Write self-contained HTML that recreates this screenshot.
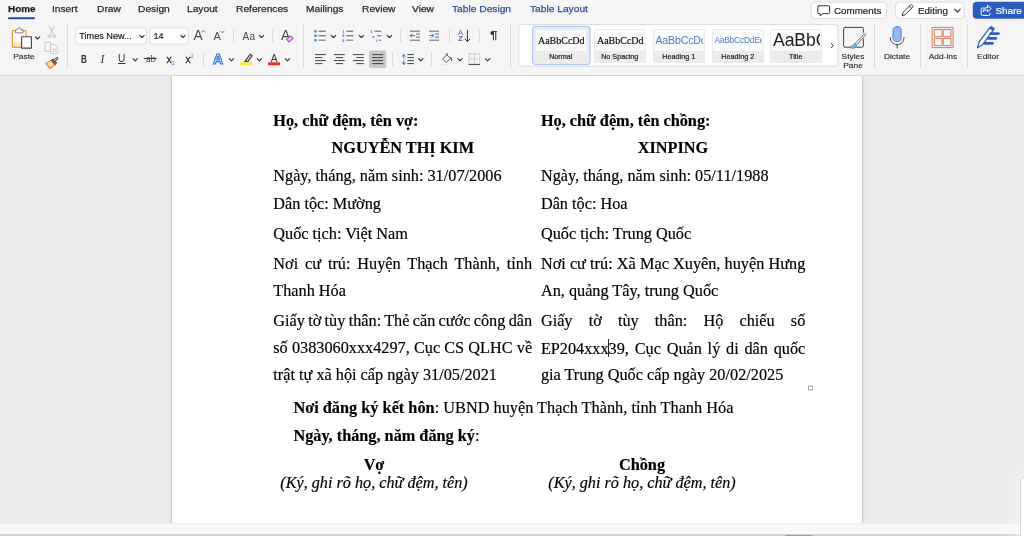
<!DOCTYPE html>
<html lang="vi">
<head>
<meta charset="utf-8">
<title>Document</title>
<style>
html,body{margin:0;padding:0;}
body{width:1024px;height:536px;overflow:hidden;position:relative;background:#ebebeb;font-family:"Liberation Sans",sans-serif;color:#222;}
.abs{position:absolute;}
#ribbon{position:absolute;left:0;top:0;width:1024px;height:75px;background:#f5f5f5;border-bottom:1px solid #d6d6d6;overflow:hidden;will-change:transform;}
.tile{position:absolute;top:29px;width:51.5px;height:33.7px;overflow:hidden;border-radius:2px;background:#fafafa;outline:1px solid rgba(0,0,0,.06);outline-offset:-1px;}
.tp{position:absolute;left:0;top:1.3px;width:calc(100% - 1.5px);height:20.3px;line-height:21.6px;white-space:nowrap;overflow:hidden;box-sizing:border-box;}
.tl{position:absolute;left:0;top:21.6px;width:100%;height:12.4px;line-height:11.8px;background:#ebebeb;font-size:7.2px;color:#222;-webkit-text-stroke:.2px #222;text-align:center;white-space:nowrap;}
.tab{position:absolute;top:2.4px;-webkit-text-stroke:.25px currentColor;height:14px;line-height:14px;font-size:9.5px;transform:scaleX(1.075);transform-origin:0 50%;color:#2a2a2a;white-space:nowrap;}
.tab.blue{color:#2f4f9a;}
.lbl{transform:scaleX(1.05);position:absolute;font-size:8px;color:#222;-webkit-text-stroke:.1px currentColor;white-space:nowrap;text-align:center;line-height:8.5px;}
.sep{position:absolute;width:1px;background:#dadada;}
#page{position:absolute;left:172px;top:76px;width:690px;height:447px;background:#fff;box-shadow:-1px 0 0 #cdcdcd,1px 0 0 #cdcdcd,0 0 5px rgba(0,0,0,.10);}
.ln{-webkit-text-stroke:.18px #000;position:absolute;font-family:"Liberation Serif",serif;font-size:16.25px;line-height:20px;height:20px;color:#000;white-space:nowrap;}
.j{white-space:nowrap;}
.c{text-align:center;}
.b{font-weight:bold;}
.i{font-style:italic;font-size:16.22px;}
</style>
</head>
<body>
<div id="docbg" class="abs" style="left:0;top:74px;width:1024px;height:450px;background:#ebebeb;"></div>
<div id="page"></div>

<!-- document text -->
<div id="doc" style="will-change:transform;">
<div class="ln b" style="left:273.3px;top:111.3px;">Họ, chữ đệm, tên vợ:</div>
<div class="ln b c" style="left:273.3px;top:138.3px;width:259px;">NGUYỄN THỊ KIM</div>
<div class="ln" style="left:273.3px;top:165.8px;">Ngày, tháng, năm sinh: 31/07/2006</div>
<div class="ln" style="left:273.3px;top:194.3px;">Dân tộc: Mường</div>
<div class="ln" style="left:273.3px;top:224.25px;">Quốc tịch: Việt Nam</div>
<div class="ln j" style="left:273.3px;top:253.9px;width:259px;word-spacing:2.800px;">Nơi cư trú: Huyện Thạch Thành, tỉnh</div>
<div class="ln" style="left:273.3px;top:281.25px;">Thanh Hóa</div>
<div class="ln j" style="left:273.3px;top:311.25px;width:259px;word-spacing:-0.757px;">Giấy tờ tùy thân: Thẻ căn cước công dân</div>
<div class="ln j" style="left:273.3px;top:338.25px;width:259px;word-spacing:0.119px;">số 0383060xxx4297, Cục CS QLHC về</div>
<div class="ln" style="left:273.3px;top:364.7px;">trật tự xã hội cấp ngày 31/05/2021</div>

<div class="ln b" style="left:540.9px;top:111.3px;">Họ, chữ đệm, tên chồng:</div>
<div class="ln b c" style="left:540.9px;top:138.3px;width:264px;">XINPING</div>
<div class="ln" style="left:540.9px;top:165.8px;">Ngày, tháng, năm sinh: 05/11/1988</div>
<div class="ln" style="left:540.9px;top:194.3px;">Dân tộc: Hoa</div>
<div class="ln" style="left:540.9px;top:224.25px;">Quốc tịch: Trung Quốc</div>
<div class="ln j" style="left:540.9px;top:253.9px;width:264px;word-spacing:0.115px;">Nơi cư trú: Xã Mạc Xuyên, huyện Hưng</div>
<div class="ln" style="left:540.9px;top:281.25px;">An, quảng Tây, trung Quốc</div>
<div class="ln j" style="left:540.9px;top:311.25px;width:264px;word-spacing:12.095px;">Giấy tờ tùy thân: Hộ chiếu số</div>
<div class="ln j" style="left:540.9px;top:339.25px;width:264px;word-spacing:1.715px;">EP204xxx39, Cục Quản lý di dân quốc</div>
<div class="ln" style="left:540.9px;top:364.7px;">gia Trung Quốc cấp ngày 20/02/2025</div>

<div class="ln" style="left:293.4px;top:397.5px;font-size:16.31px;"><span class="b">Nơi đăng ký kết hôn</span>: UBND huyện Thạch Thành, tỉnh Thanh Hóa</div>
<div class="ln" style="left:293.4px;top:425.6px;"><span class="b">Ngày, tháng, năm đăng ký</span>:</div>
<div class="ln b c" style="left:274px;top:454.6px;width:200px;">Vợ</div>
<div class="ln i c" style="left:274px;top:473px;width:200px;">(Ký, ghi rõ họ, chữ đệm, tên)</div>
<div class="ln b c" style="left:542px;top:454.6px;width:200px;">Chồng</div>
<div class="ln i c" style="left:542px;top:473px;width:200px;">(Ký, ghi rõ họ, chữ đệm, tên)</div>
</div>

<!-- text cursor + table handle -->
<div class="abs" style="left:608px;top:338.7px;width:1px;height:18px;background:#2a2a2a;"></div>
<svg class="abs" style="left:800px;top:380px;" width="20" height="16"><rect x="8.5" y="6.100" width="3.900" height="3.700" fill="#fff" stroke="#999" stroke-width=".9"/></svg>

<!-- bottom strip -->
<div class="abs" style="left:0;top:523px;width:1024px;height:11px;background:#f8f8f8;border-top:1px solid #eeeeee;box-sizing:border-box;"></div>
<div class="abs" style="left:0;top:534px;width:1024px;height:2px;background:#d2d2d2;"></div>
<div class="abs" style="left:784.5px;top:535px;width:27.5px;height:1px;background:#9c9c9c;"></div>
<div class="abs" style="left:1020px;top:477px;width:10px;height:70px;background:#fff;border:1px solid #dadada;border-radius:4px;box-shadow:0 0 22px 8px rgba(255,255,255,.42);"></div>

<div id="ribbon">
<!-- tabs -->
<div class="tab" style="left:7.5px;font-weight:bold;color:#1e1e1e;transform:scaleX(1.04);">Home</div>
<div class="abs" style="left:7.5px;top:17px;width:27.5px;height:2px;background:#2b4b9b;border-radius:1px;transform:translateY(.3px);"></div>
<div class="tab" style="left:52px;">Insert</div>
<div class="tab" style="left:97px;">Draw</div>
<div class="tab" style="left:138px;">Design</div>
<div class="tab" style="left:187px;">Layout</div>
<div class="tab" style="left:236px;">References</div>
<div class="tab" style="left:306px;">Mailings</div>
<div class="tab" style="left:362px;">Review</div>
<div class="tab" style="left:412px;">View</div>
<div class="tab blue" style="left:452px;">Table Design</div>
<div class="tab blue" style="left:530px;">Table Layout</div>

<!-- right buttons -->
<svg class="abs" style="left:0;top:0;" width="1024" height="22"><rect x="811.300" y="2.200" width="75.400" height="16.200" rx="4" fill="#fff" stroke="#dcdcdc"/><rect x="895.500" y="2.200" width="68.800" height="16.200" rx="4" fill="#fff" stroke="#dcdcdc"/><rect x="972.800" y="1.700" width="60" height="17.100" rx="4" fill="#2b5cbe"/></svg>

<div class="abs" style="left:834px;top:3.6px;font-size:9.8px;line-height:13px;color:#222;-webkit-text-stroke:.2px #222;">Comments</div>

<div class="abs" style="left:918px;top:3.6px;font-size:9.8px;line-height:13px;color:#222;-webkit-text-stroke:.2px #222;">Editing</div>

<div class="abs" style="left:995.5px;top:3.6px;font-size:9.8px;line-height:13px;color:#fff;-webkit-text-stroke:.2px #fff;">Share</div>

<!-- font boxes -->

<div class="abs" style="left:79.3px;top:29.5px;font-size:9.15px;line-height:13px;color:#222;-webkit-text-stroke:.2px #222;z-index:2;">Times New...</div>

<div class="abs" style="left:153.5px;top:29.5px;font-size:9.1px;line-height:13px;color:#222;-webkit-text-stroke:.2px #222;z-index:2;">14</div>

<!-- labels -->
<div class="lbl" style="left:4px;top:53.4px;width:40px;">Paste</div>
<div class="lbl" style="left:833px;top:53.4px;width:40px;">Styles<br>Pane</div>
<div class="lbl" style="left:877px;top:53.4px;width:40px;">Dictate</div>
<div class="lbl" style="left:923px;top:53.4px;width:40px;">Add-ins</div>
<div class="lbl" style="left:967.5px;top:53.4px;width:40px;">Editor</div>

<!-- text-based icons -->
<div class="abs" style="left:80.6px;top:52.6px;font-size:10.4px;line-height:14px;font-weight:bold;color:#333;transform:scaleX(.78);transform-origin:0 0;">B</div>
<div class="abs" style="left:100.5px;top:51.5px;font-size:11.5px;line-height:14px;font-style:italic;font-family:'Liberation Serif',serif;color:#333;">I</div>
<div class="abs" style="left:118px;top:52px;font-size:10.3px;line-height:14px;color:#333;text-decoration:underline;">U</div>
<div class="abs" style="left:143.800px;top:51.8px;font-size:10.6px;line-height:14px;color:#444;text-decoration:line-through;font-family:'Liberation Serif',serif;white-space:pre;">&#8201;ab&#8202;</div>
<div class="abs" style="left:166.5px;top:51.5px;font-size:10.5px;line-height:14px;color:#333;-webkit-text-stroke:.3px #333;">x</div>
<div class="abs" style="left:171.8px;top:60.3px;font-size:5.5px;line-height:6px;color:#2e7bd6;">2</div>
<div class="abs" style="left:185.5px;top:51.5px;font-size:10.5px;line-height:14px;color:#333;-webkit-text-stroke:.3px #333;">x</div>
<div class="abs" style="left:190.8px;top:53px;font-size:5.5px;line-height:6px;color:#2e7bd6;">2</div>
<div class="abs" style="left:193.5px;top:28px;font-size:13.8px;line-height:16px;color:#4a4a4a;">A</div>
<div class="abs" style="left:213.5px;top:29.5px;font-size:11px;line-height:13px;color:#4a4a4a;">A</div>
<div class="abs" style="left:242.5px;top:30px;font-size:10px;line-height:13px;color:#4a4a4a;letter-spacing:.3px;">Aa</div>
<div class="abs" style="left:281px;top:28px;font-size:13.8px;line-height:16px;color:#4a4a4a;">A</div>
<div class="abs" style="left:270.7px;top:51.5px;font-size:10.3px;line-height:14px;color:#3a3a3a;">A</div>
<div class="abs" style="left:213px;top:49.5px;font-size:14px;line-height:18px;font-weight:bold;color:#fff;-webkit-text-stroke:1.15px #2f78d2;">A</div>
<div class="abs" style="left:458px;top:27.5px;font-size:7.5px;line-height:9px;color:#2e7bd6;">A</div>
<div class="abs" style="left:458.3px;top:34.3px;font-size:7.5px;line-height:9px;color:#333;">Z</div>
<div class="abs" style="left:490.2px;top:28.3px;font-size:10.9px;line-height:15px;color:#333;font-weight:bold;transform:scaleX(1.25);transform-origin:0 50%;">¶</div>

<!-- styles gallery -->
<svg class="abs" style="left:0;top:0;" width="1024" height="76"><rect x="518.8" y="24.6" width="319.2" height="41.6" rx="3" fill="#fff" stroke="#dcdcdc"/><rect x="532.6" y="26.4" width="57.4" height="38.2" rx="3" fill="#e6ebf5" stroke="#a8bee6"/><rect x="75.800" y="27.900" width="71" height="16.200" rx="3" fill="#fff" stroke="#dcdcdc"/><rect x="150" y="27.900" width="38.400" height="16.200" rx="3" fill="#fff" stroke="#dcdcdc"/></svg>

<div class="tile" style="left:535px;"><div class="tp" style="font-family:'Liberation Serif',serif;font-size:10px;color:#111;text-align:center;padding-left:2.5px;-webkit-text-stroke:.2px #111;">AaBbCcDd</div><div class="tl">Normal</div></div>
<div class="tile" style="left:594px;"><div class="tp" style="font-family:'Liberation Serif',serif;font-size:10px;color:#111;text-align:center;padding-left:2.5px;-webkit-text-stroke:.2px #111;">AaBbCcDd</div><div class="tl">No Spacing</div></div>
<div class="tile" style="left:653px;"><div class="tp" style="font-size:10.6px;color:#4b7cc0;padding-left:2.4px;letter-spacing:-.15px;">AaBbCcDd</div><div class="tl">Heading 1</div></div>
<div class="tile" style="left:712px;"><div class="tp" style="font-size:8.4px;color:#4b7cc0;padding-left:2.4px;letter-spacing:-.2px;">AaBbCcDdEe</div><div class="tl">Heading 2</div></div>
<div class="tile" style="left:770px;"><div class="tp" style="font-size:17.6px;color:#1c1c1c;padding-left:3px;letter-spacing:-.1px;">AaBbCc</div><div class="tl">Title</div></div>

<svg class="abs" style="left:0;top:0;" width="1024" height="76" viewBox="0 0 1024 76" fill="none" stroke-linecap="round" stroke-linejoin="round">
<!-- separators -->
<g stroke="#dcdcdc" stroke-width="1" stroke-linecap="butt">
<path d="M67.5 24V68.5M303.5 24V68.5M510.5 24V68.5M874.5 24V68.5M920.5 24V68.5M967.5 24V68.5"/>
<path d="M233.5 29.5V42M272.5 29.5V42M400.5 29.5V42M449.5 29.5V42M479.5 29.5V42"/>
<path d="M203.5 53V66M392.5 53V66M431.5 53V66"/>
</g>
<!-- chevrons -->
<g stroke="#333" stroke-width="1.1">
<path d="M35.3 36.8l2.2 2.2 2.2-2.2"/>
<path d="M139.8 35.3l2.2 2.2 2.2-2.2"/>
<path d="M180.8 35.3l2.2 2.2 2.2-2.2"/>
<path d="M133 58.6l2.2 2.2 2.2-2.2"/>
<path d="M259.3 35.3l2.2 2.2 2.2-2.2"/>
<path d="M229.2 58.6l2.2 2.2 2.2-2.2"/>
<path d="M257.2 58.6l2.2 2.2 2.2-2.2"/>
<path d="M285.2 58.6l2.2 2.2 2.2-2.2"/>
<path d="M331.2 35.3l2.2 2.2 2.2-2.2"/>
<path d="M359.2 35.3l2.2 2.2 2.2-2.2"/>
<path d="M387.2 35.3l2.2 2.2 2.2-2.2"/>
<path d="M418.6 58.6l2.2 2.2 2.2-2.2"/>
<path d="M457.8 58.6l2.2 2.2 2.2-2.2"/>
<path d="M485.4 58.6l2.2 2.2 2.2-2.2"/>
<path d="M954.6 9.2l2.8 2.8 2.8-2.8"/>
<path d="M831.3 43.4l2.3 2.2-2.3 2.2" stroke-width="1"/>
</g>
<!-- paste -->
<defs><linearGradient id="pg" x1="0" y1="0" x2="0" y2="1"><stop offset="0" stop-color="#fff"/><stop offset=".6" stop-color="#fff8ee"/><stop offset="1" stop-color="#fbd9a6"/></linearGradient></defs><rect x="12.4" y="30.6" width="13.6" height="16.8" rx=".8" fill="url(#pg)" stroke="#e9963a" stroke-width="1.2"/>
<path d="M15.500 32.400v-2.500h2.100a1.700 1.700 0 1 1 3.300 0H23v2.500z" fill="#fff" stroke="#6a6a6a" stroke-width=".8"/>
<rect x="21.6" y="36.7" width="9.8" height="11.4" fill="#fff" stroke="#444" stroke-width="1.1"/>
<!-- scissors (disabled) -->
<g stroke="#bdbdbd" stroke-width=".9">
<path d="M49.3 26.500l4.600 8.600M54.100 26.500l-4.600 8.600"/>
<circle cx="49.3" cy="36.2" r="1.3" stroke="#a9c6e6"/><circle cx="54.1" cy="36.2" r="1.3" stroke="#a9c6e6"/>
</g>
<!-- copy (disabled) -->
<g stroke="#c4c4c4" stroke-width=".9" fill="#f6f6f6">
<path d="M45.3 42.3h5.2v9h-5.2z"/>
<path d="M51 44.6h3.8l2.4 2.4v6.6H51z" fill="#fafafa"/>
<path d="M52.6 49.2h3M52.6 51h3" />
</g>
<!-- format painter -->
<path d="M46 63.300l5.400-3.200 3.500 4.300-4.600 4.300z" fill="#fbdcb4" stroke="#e8832a" stroke-width="1.100"/>
<path d="M51.600 60.200l1.600-1.300 3.600 4.200-1.700 1.500z" fill="#666" stroke="#444" stroke-width=".8"/>
<path d="M54 61l3-2.500" stroke="#444" stroke-width="2.600" stroke-linecap="round"/>
<path d="M54.200 60.800l2.700-2.200" stroke="#f5f5f5" stroke-width=".9" stroke-linecap="round"/>
<!-- grow/shrink carets -->
<path d="M201.6 32.2l1.7-1.8 1.7 1.8" stroke="#2e7bd6" stroke-width="1"/>
<path d="M220.8 31.2l1.6 1.7 1.6-1.7" stroke="#2e7bd6" stroke-width="1"/>
<!-- eraser -->
<path d="M286.6 39.4l4-3.6 2.4 2.6-4 3.4z" fill="#ebcdf3" stroke="#a64ac0" stroke-width="1.1"/>
<!-- highlighter -->
<path d="M245.600 60.400l4.600-6.200 2 1.500-4.500 6.100z" fill="#d8d8d8" stroke="#444" stroke-width="1.100"/>
<path d="M245.4 60.8l-1.6 1.2h2.6z" fill="#444" stroke="#444" stroke-width=".6"/>
<rect x="240" y="62.3" width="12" height="3" fill="#f7ec3a"/>
<rect x="268" y="62.3" width="12" height="3" fill="#e4322b"/>
<!-- bullets -->
<g fill="#3f88d8"><rect x="314.200" y="30" width="2.400" height="2.400" rx=".7"/><rect x="314.200" y="34.600" width="2.400" height="2.400" rx=".7"/><rect x="314.200" y="39.100" width="2.400" height="2.400" rx=".7"/></g>
<g stroke="#555" stroke-width="1" stroke-linecap="butt"><path d="M318.5 31.2h7.3M318.5 35.8h7.3M346.3 31.2h7M346.3 35.8h7M374.3 31.2h7M377.3 35.8h4"/></g>
<g stroke="#9a9a9a" stroke-width="1.5" stroke-linecap="butt"><path d="M318.5 40.3h7.3M346.3 40.3h7M378.6 40.3h2.7"/></g>
<!-- indent icons -->
<g stroke="#666" stroke-width="1" stroke-linecap="butt"><path d="M410 31.2h10M416 34h4M416 37.2h4M410 40.2h10"/><path d="M429 31.2h10M435 34h4M435 37.2h4M429 40.2h10"/></g>
<g stroke="#2e7bd6" stroke-width="1"><path d="M414.6 35.6h-4.2M412 33.9l-1.7 1.7 1.7 1.7"/><path d="M429.4 35.6h4.2M432 33.9l1.7 1.7-1.7 1.7"/></g>
<!-- sort arrow -->
<path d="M467.4 30.2v11.2M465 39l2.4 2.5 2.4-2.5" stroke="#333" stroke-width="1"/>
<!-- alignment -->
<rect x="369" y="50.6" width="17.3" height="17.3" rx="2" fill="#c9c9c9"/>
<g stroke="#444" stroke-width="1" stroke-linecap="butt">
<path d="M315 54.6h10.8M315 57.6h7.4M315 60.6h10.8M315 63.6h7.4"/>
<path d="M334 54.6h10.8M335.8 57.6h7.2M334 60.6h10.8M335.8 63.6h7.2"/>
<path d="M353 54.6h10.8M356.4 57.6h7.4M353 60.6h10.8M356.4 63.6h7.4"/>
<path d="M372.1 54.6h11.1M372.1 57.6h11.1M372.1 60.6h11.1M372.1 63.6h11.1"/>
<path d="M407.3 54.6h6.6M407.3 57.6h6.6M407.3 60.6h6.6M407.3 63.6h6.6"/>
</g>
<path d="M403.8 54.600v3.700M403.8 60.800v3.600M402.3 56.2l1.5-1.6 1.5 1.6M402.3 62.8l1.5 1.6 1.5-1.6" stroke="#2e7bd6" stroke-width="1"/>
<!-- shading bucket -->
<path d="M443 58.8l3.8-4 3.6 3.6-3.8 3.8z" fill="#fff" stroke="#444" stroke-width=".9"/>
<path d="M446 54.4c0-1.6 1.8-1.6 1.8 0" stroke="#444" stroke-width=".8"/>
<path d="M450.6 57.4c1 1 1.2 2 1 3.2" stroke="#2f6fd0" stroke-width="1.2"/>
<rect x="440.6" y="63.4" width="11.4" height="1.6" fill="#ececec"/>
<!-- borders -->
<g stroke="#9a9a9a" stroke-width=".8" stroke-dasharray="1 1" stroke-linecap="butt"><path d="M469 53.8h10.8M469 59h10.8M469 53.8v10.4M474.4 53.8v10.4M479.8 53.8v10.4"/></g>
<path d="M468.6 64.4h11.4" stroke="#444" stroke-width="1.1" stroke-linecap="butt"/>
<!-- numbering glyph marks -->
<g fill="#2e7bd6" stroke="none" font-family="'Liberation Sans',sans-serif" font-size="4.400" font-weight="bold" text-anchor="middle"><text x="343.300" y="32.900">1</text><text x="343.300" y="37.300">2</text><text x="343.300" y="41.800">3</text><text x="371.200" y="32.900">1</text><text x="373.500" y="37.500">a</text><text x="376.600" y="41.800">i</text></g>
<!-- comments icon -->
<path d="M819 5.8h9.4a1.2 1.2 0 0 1 1.2 1.2v5.4a1.2 1.2 0 0 1-1.2 1.2h-5.6l-2.6 2.2v-2.2H819a1.2 1.2 0 0 1-1.2-1.2V7a1.2 1.2 0 0 1 1.2-1.2z" stroke="#333" stroke-width="1"/>
<!-- pencil icon -->
<path d="M902.2 15.4l.8-3 7.4-7.2a1.3 1.3 0 0 1 1.9 0l.3.3a1.3 1.3 0 0 1 0 1.9l-7.4 7.2zM909.4 6.2l2.2 2.2" stroke="#333" stroke-width="1"/>
<!-- share icon -->
<path d="M984.4 8h-2a1.2 1.2 0 0 0-1.2 1.2v5a1.2 1.2 0 0 0 1.2 1.2h6.4a1.2 1.2 0 0 0 1.2-1.2v-1M987.6 5.4l3.6 3.2-3.6 3.2v-2c-2.4 0-3.6.8-4.4 2.2 0-2.800 1.6-4.400 4.400-4.600z" stroke="#fff" stroke-width="1"/>
<!-- styles pane -->
<rect x="843.6" y="27.4" width="19.8" height="19.8" rx="1.5" stroke="#444" stroke-width="1"/>
<path d="M855 44.600l10-10.400" stroke="#f4f4f4" stroke-width="4"/>
<path d="M855.600 43l9-9.400 1.200 1.200-8.800 9.600z" fill="#fff" stroke="#555" stroke-width=".9"/>
<path d="M849.6 47.600c2-.4 2.400-2.200 3.800-3.400 1.400-1 3.400.6 2.800 2.200-.8 2-3.800 2.400-6.600 1.200z" fill="#7fb0e6" stroke="#4a86d0" stroke-width=".8"/>
<!-- dictate -->
<rect x="893" y="26.600" width="8.200" height="15" rx="4.100" fill="#8fbcea" stroke="#4a86d0" stroke-width="1"/>
<path d="M890.200 37.600c0 4.200 3 7 6.900 7s6.900-2.800 6.900-7M897.100 44.600v3.400" stroke="#444" stroke-width="1"/>
<!-- add-ins -->
<g stroke="#d9694a" stroke-width=".9"><rect x="932.500" y="27.400" width="20.600" height="20.200"/><rect x="934.600" y="29.500" width="7.400" height="7.200"/><rect x="943.600" y="29.500" width="7.400" height="7.200"/><rect x="934.600" y="38.400" width="7.400" height="7.200"/><rect x="943.600" y="38.400" width="7.400" height="7.200"/></g>
<!-- editor -->
<path d="M977.600 47.600l1.400-5.400 10.600-14.400 3.600 2.400-10.800 14.600z" fill="#fff" stroke="#2f5fc4" stroke-width="1.300"/>
<path d="M989.600 27.800l1.600-1.400 3.200 2.200-1.200 1.600z" fill="#2f5fc4" stroke="#2f5fc4" stroke-width="1"/>
<path d="M991 33.600h7.400M988.400 38.400h7.400M985 43.400h7.400" stroke="#2f5fc4" stroke-width="2.900"/>
</svg>
</div>

</body>
</html>
